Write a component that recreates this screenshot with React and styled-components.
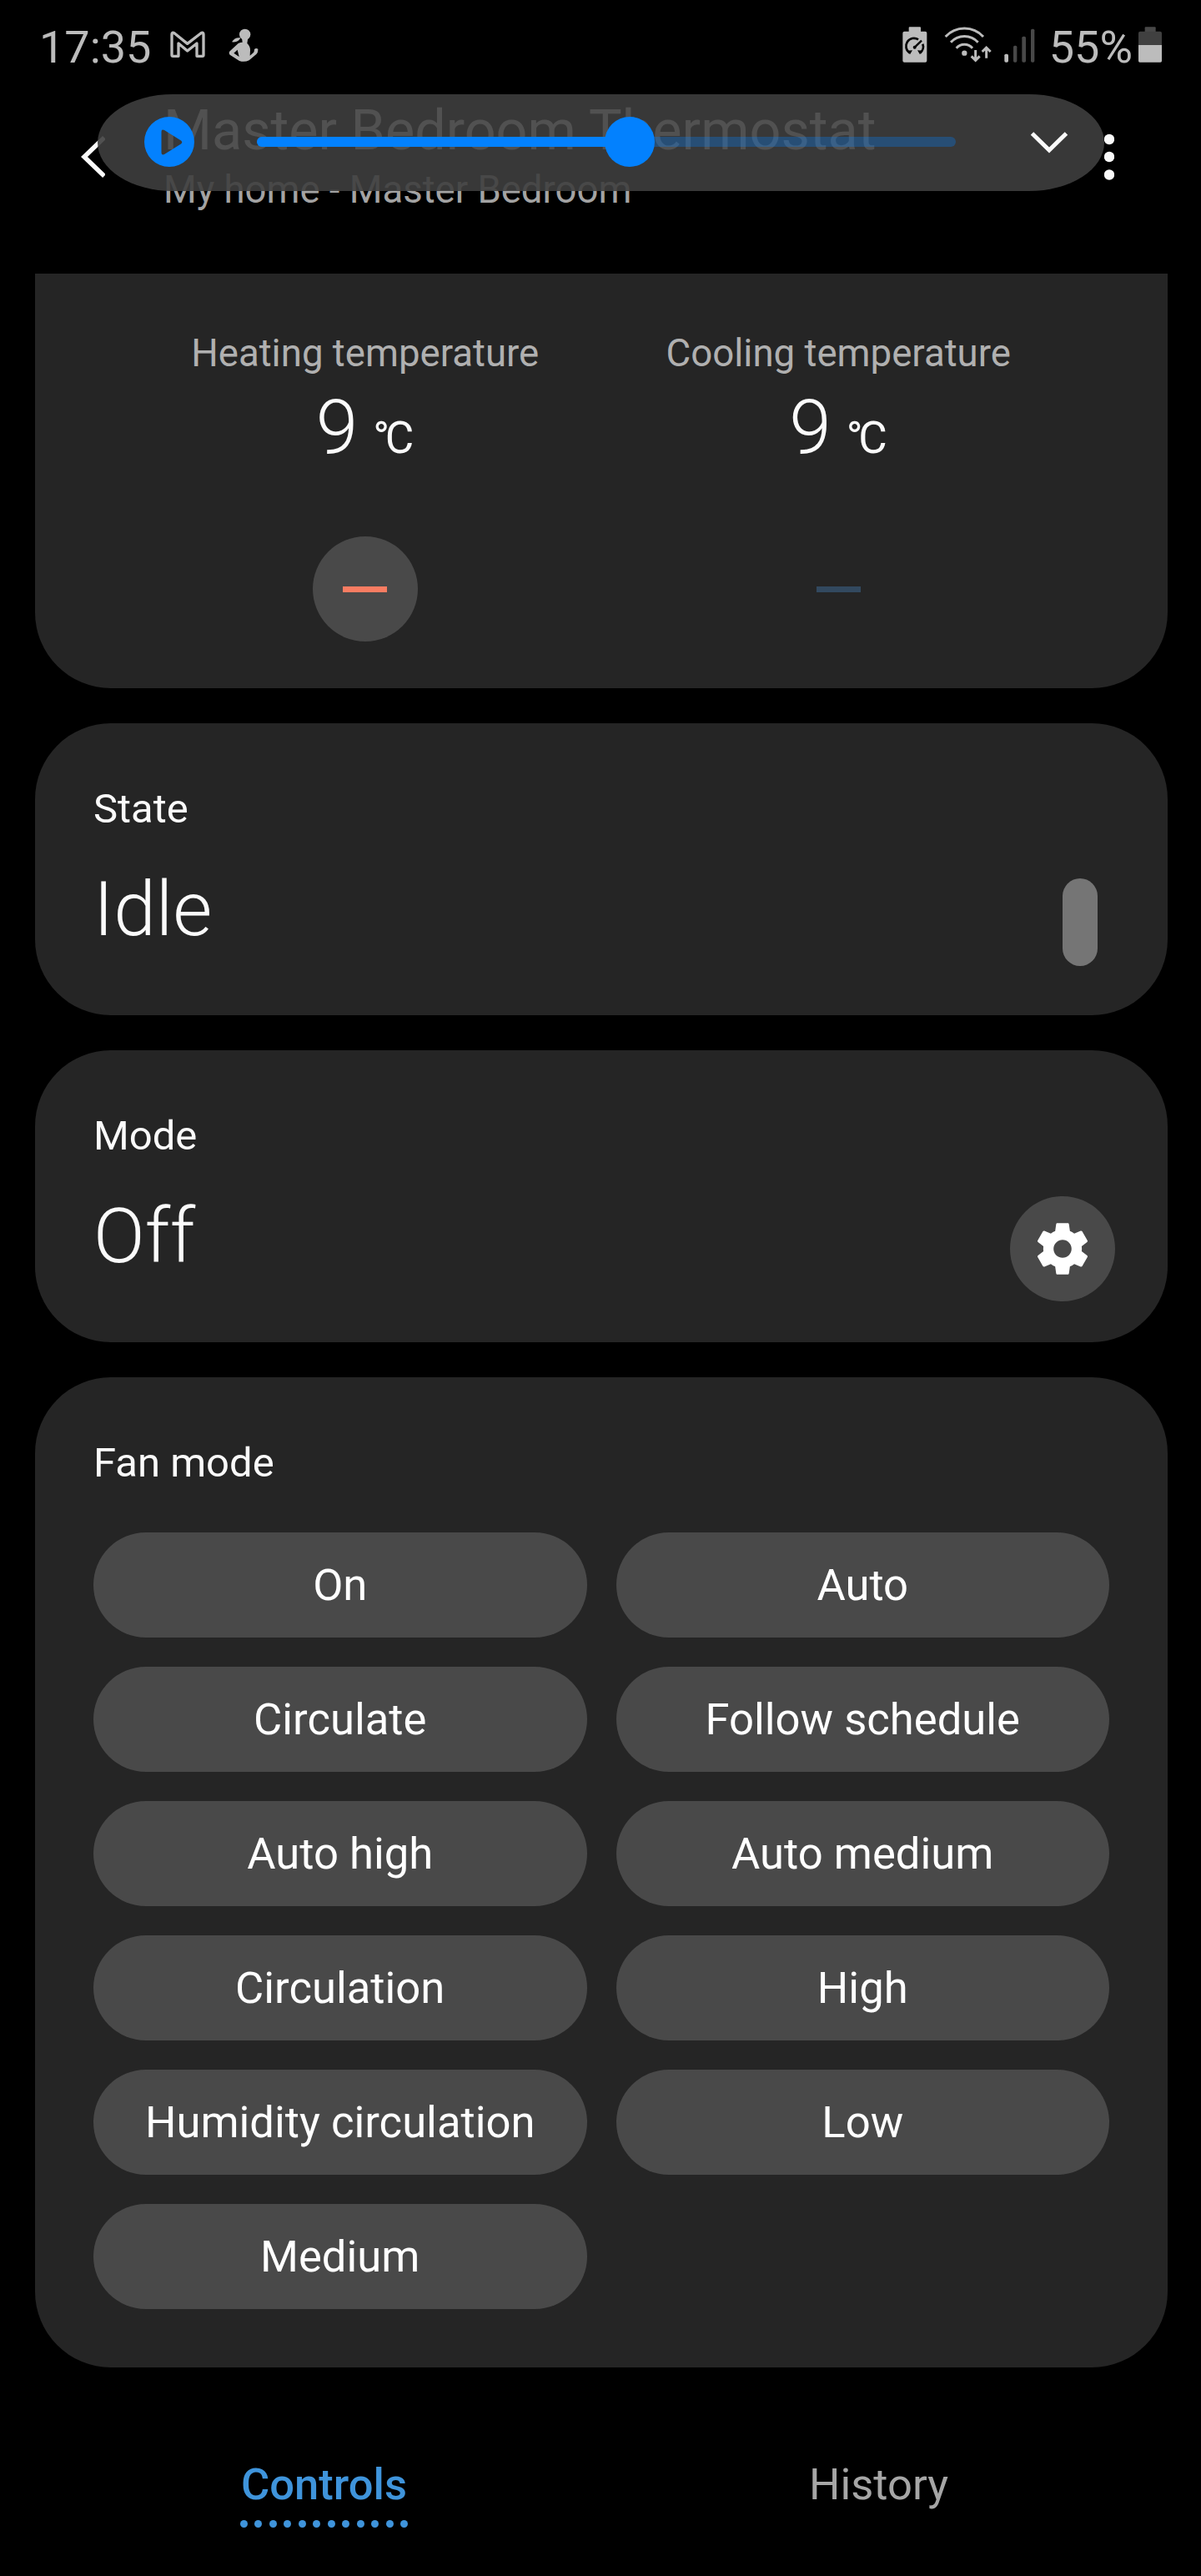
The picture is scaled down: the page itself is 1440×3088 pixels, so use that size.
import React from 'react';
import styled, { createGlobalStyle } from 'styled-components';

const GlobalStyle = createGlobalStyle`
  * {
    box-sizing: border-box;
  }

  body {
    margin: 0;
    background: #000;
    color: #fafafa;
    font-family: Roboto, "Noto Sans", sans-serif;
  }

  button {
    border: 0;
    padding: 0;
    background: none;
    color: inherit;
    font: inherit;
  }

  svg {
    display: block;
    flex: none;
  }
`;

const Screen = styled.div`
  position: relative;
  display: flex;
  flex-direction: column;
  width: 1440px;
  height: 3088px;
  overflow: hidden;
  background: #000;
`;

const StatusBar = styled.div`
  display: flex;
  justify-content: space-between;
  align-items: center;
  height: 108px;
  padding: 0 47px;
  color: #bcbcbc;
`;

const StatusGroup = styled.div`
  display: flex;
  align-items: center;
  gap: ${props => props.$gap}px;
`;

const StatusText = styled.span`
  padding-top: 5px;
  font-size: 54px;
  line-height: 64px;
`;

const Header = styled.header`
  display: flex;
  height: 220px;
  padding: 10px 104px 0 96px;
`;

const HeaderButton = styled.button`
  display: flex;
  align-items: center;
  height: 50px;
  margin-top: 45px;
`;

const Heading = styled.div`
  flex: 1;
  margin-left: 70px;
`;

const Title = styled.h1`
  margin: 0;
  font-size: 66.5px;
  font-weight: 400;
  line-height: 77px;
`;

const Subtitle = styled.div`
  margin-top: 6px;
  color: #a3a3a3;
  font-size: 45.5px;
  line-height: 53px;
`;

// floats above the header, which stays faintly visible through it
const MediaPill = styled.div`
  position: absolute;
  top: 113px;
  left: 117px;
  display: flex;
  align-items: center;
  width: 1207px;
  height: 116px;
  padding: 0 43px 2px 56px;
  border-radius: 90px / 58px;
  background: rgba(62, 62, 62, 0.9);
`;

const Track = styled.div`
  position: relative;
  width: 838px;
  height: 12px;
  margin: 0 89px 0 75px;
  border-radius: 6px;
  background: rgba(3, 129, 254, 0.31);
`;

const TrackFill = styled.div`
  width: ${props => props.$value}%;
  height: 12px;
  border-radius: 6px;
  background: #0381fe;
`;

const Thumb = styled.div`
  position: absolute;
  top: -24px;
  left: ${props => props.$value}%;
  width: 60px;
  height: 60px;
  margin-left: -30px;
  border-radius: 50%;
  background: #0381fe;
`;

const Cards = styled.main`
  display: flex;
  flex-direction: column;
  gap: 42px;
  padding: 0 40px 0 42px;
`;

const Card = styled.section`
  padding: 74px 70px 0 70px;
  border-radius: 91px;
  background: #252525;
`;

const TemperatureCard = styled(Card)`
  display: flex;
  height: 497px;
  padding: 69px 111px 0 112px;
  border-radius: 0 0 91px 91px;
`;

const ValueCard = styled(Card)`
  height: 350px;
  padding-right: 63px;
`;

const FanCard = styled(Card)`
  padding-bottom: 70px;
`;

const Temperature = styled.div`
  flex: 1;
  display: flex;
  flex-direction: column;
  align-items: center;
`;

const TemperatureLabel = styled.div`
  color: #b0b0b0;
  font-size: 45.6px;
  line-height: 53px;
`;

const Reading = styled.div`
  display: flex;
  align-items: flex-end;
  gap: 18px;
  height: 107px;
  margin: 10px 0 76px;
  padding-right: 6px;
`;

const Value = styled.div`
  font-size: 91px;
  font-weight: 300;
  line-height: 107px;
`;

const Unit = styled.div`
  padding-bottom: 11px;
  font-size: 53px;
  letter-spacing: -5.5px;
  line-height: 62px;
`;

const RoundButton = styled.button`
  display: flex;
  align-items: center;
  justify-content: center;
  width: 126px;
  height: 126px;
  border-radius: 50%;
  background: ${props => (props.disabled ? 'transparent' : '#494949')};
`;

const Minus = styled.span`
  width: 53px;
  height: 7px;
  background: ${props => props.$color};
`;

const CardLabel = styled.div`
  font-size: 49px;
  line-height: 58px;
`;

const ValueRow = styled.div`
  display: flex;
  align-items: center;
  justify-content: space-between;
  height: 136px;
  margin-top: 38px;

  ${Value} {
    align-self: flex-start;
  }
`;

const StateBar = styled.div`
  width: 42px;
  height: 105px;
  margin-right: 21px;
  border-radius: 21px;
  background: #757575;
`;

const FanGrid = styled.div`
  display: grid;
  grid-template-columns: 1fr 1fr;
  gap: 35px;
  margin-top: 54px;
`;

const FanButton = styled.button`
  height: 126px;
  border-radius: 63px;
  background: #494949;
  color: #fff;
  font-size: 52.6px;
`;

const Tabs = styled.nav`
  display: flex;
  padding: 109px 54px 0 56px;
`;

const Tab = styled.div`
  flex: 1;
  display: flex;
  flex-direction: column;
  align-items: center;
  color: ${props => (props.$active ? '#3f94db' : '#a6a6a6')};
  font-size: 52.5px;
  font-weight: ${props => (props.$active ? 500 : 400)};
  line-height: 62px;
`;

const Dots = styled.div`
  display: flex;
  justify-content: space-between;
  width: 202px;
  margin-top: 12px;
`;

const Dot = styled.span`
  width: 9px;
  height: 9px;
  border-radius: 50%;
  background: #3f94db;
`;

const GmailIcon = () => (
  <svg width="42" height="44" viewBox="611 96 126 132" fill="none" stroke="#bcbcbc" strokeWidth="10" strokeLinejoin="round">
    <path d="M617 124Q617 114 627 120L673 157L721 120Q731 114 731 124V198Q731 202 727 202H707V156L673 183L641 156V202H621Q617 202 617 198Z" />
  </svg>
);

const PersonIcon = () => (
  <svg width="36" height="44" viewBox="821 96 108 132" fill="#bcbcbc">
    <circle cx="880" cy="124" r="20" />
    <path d="M833 151Q843 133 864 136Q858 154 833 151Z" />
    <path
      fillRule="evenodd"
      d="M869 136H891L888 156Q899 166 899 180L898 200L910 190Q914 186 914 177Q920 171 927 176Q928 188 921 195L895 217Q878 225 860 219L826 197Q820 190 826 184L856 156Q864 152 871 152ZM853 179L840 191L859 204Z"
    />
  </svg>
);

const PowerModeIcon = () => (
  <svg width="30" height="44" viewBox="125 96 90 132">
    <path d="M148 113V100Q148 97 151 97H188Q191 97 191 100V113H207Q213 113 213 119V218Q213 224 207 224H132Q126 224 126 218V119Q126 113 132 113Z" fill="#bcbcbc" />
    <g fill="none" stroke="#000" strokeWidth="8">
      <path d="M151 190A28 28 0 0 1 182 142" />
      <path d="M198 158A28 28 0 0 1 189 190" />
      <path d="M170 169L194 146" strokeWidth="7" />
    </g>
    <circle cx="169" cy="170" r="6" fill="#000" />
    <path d="M143 182L161 181L152 196ZM197 182L179 181L188 196Z" fill="#000" />
  </svg>
);

const WifiIcon = () => (
  <svg width="58" height="44" viewBox="276 96 174 132" fill="none" stroke="#bcbcbc" strokeWidth="9">
    <path d="M281 132A92 92 0 0 1 417 132" />
    <path d="M300 152A66 66 0 0 1 398 152" />
    <path d="M320 173A39 39 0 0 1 378 173" />
    <circle cx="349" cy="191" r="9.5" fill="#bcbcbc" stroke="none" />
    <path d="M389 180V216M374 202L389 217L404 202M428 209V171M413 186L428 171L443 186" />
  </svg>
);

const SignalIcon = () => (
  <svg width="37" height="44" viewBox="491 96 111 132" fill="#484848">
    <rect x="492" y="194" width="14" height="30" rx="5" fill="#bcbcbc" />
    <rect x="524" y="164" width="13" height="60" rx="5" />
    <rect x="555" y="131" width="14" height="93" rx="5" />
    <rect x="587" y="104" width="13" height="120" rx="5" />
  </svg>
);

const BatteryIcon = () => (
  <svg width="28" height="44" viewBox="975 96 84 132">
    <path d="M998 114V100Q998 97 1001 97H1034Q1037 97 1037 100V114Z" fill="#484848" />
    <path d="M975 162V119Q975 113 981 113H1053Q1059 113 1059 119V162Z" fill="#404040" />
    <path d="M975 162H1059V219Q1059 224 1054 224H980Q975 224 975 219Z" fill="#bcbcbc" />
  </svg>
);

const BackIcon = () => (
  <svg width="30" height="50" viewBox="0 0 30 50" fill="none" stroke="#fafafa" strokeWidth="5.5">
    <path d="M29 2L5 25L29 48" />
  </svg>
);

const MoreIcon = () => (
  <svg width="12" height="56" viewBox="0 0 12 56" fill="#fafafa">
    <circle cx="6" cy="7" r="6.2" />
    <circle cx="6" cy="28" r="6.2" />
    <circle cx="6" cy="49.5" r="6.2" />
  </svg>
);

const PlayIcon = () => (
  <svg width="60" height="60" viewBox="0 0 60 60" fill="#0381fe">
    <path
      fillRule="evenodd"
      d="M30 0A30 30 0 1 1 30 60A30 30 0 1 1 30 0ZM20.5 18V43Q20.5 46.5 24 45L44 32.5Q46.5 30.5 44 28.5L24 16Q20.5 14.5 20.5 18Z"
    />
  </svg>
);

const ExpandIcon = () => (
  <svg width="46" height="28" viewBox="0 0 46 28" fill="none" stroke="#fafafa" strokeWidth="5">
    <path d="M2.5 4L23 24L43.5 4" />
  </svg>
);

const GearIcon = () => (
  <svg width="74" height="74" viewBox="0 0 24 24" fill="#fff">
    <path d="M19.43 12.98c.04-.32.07-.64.07-.98s-.03-.66-.07-.98l2.11-1.65c.19-.15.24-.42.12-.64l-2-3.46c-.12-.22-.39-.3-.61-.22l-2.49 1c-.52-.4-1.08-.73-1.69-.98l-.38-2.65C14.46 2.18 14.25 2 14 2h-4c-.25 0-.46.18-.49.42l-.38 2.65c-.61.25-1.17.59-1.69.98l-2.49-1c-.23-.09-.49 0-.61.22l-2 3.46c-.13.22-.07.49.12.64l2.11 1.65c-.04.32-.07.65-.07.98s.03.66.07.98l-2.11 1.65c-.19.15-.24.42-.12.64l2 3.46c.12.22.39.3.61.22l2.49-1c.52.4 1.08.73 1.69.98l.38 2.65c.03.24.24.42.49.42h4c.25 0 .46-.18.49-.42l.38-2.65c.61-.25 1.17-.59 1.69-.98l2.49 1c.23.09.49 0 .61-.22l2-3.46c.12-.22.07-.49-.12-.64l-2.11-1.65zM12 15.5c-1.93 0-3.5-1.57-3.5-3.5s1.57-3.5 3.5-3.5 3.5 1.57 3.5 3.5-1.57 3.5-3.5 3.5z" />
  </svg>
);

const temperatures = [
  { label: 'Heating temperature', value: 9, color: '#f97c62', disabled: false },
  { label: 'Cooling temperature', value: 9, color: '#32495f', disabled: true },
];

const fanModes = [
  'On',
  'Auto',
  'Circulate',
  'Follow schedule',
  'Auto high',
  'Auto medium',
  'Circulation',
  'High',
  'Humidity circulation',
  'Low',
  'Medium',
];

const mediaVolume = 53.4;

export default function App() {
  return (
    <Screen>
      <GlobalStyle />

      <StatusBar>
        <StatusGroup $gap={28}>
          <StatusGroup $gap={23}>
            <StatusText>17:35</StatusText>
            <GmailIcon />
          </StatusGroup>
          <PersonIcon />
        </StatusGroup>
        <StatusGroup $gap={17}>
          <StatusGroup $gap={20}>
            <PowerModeIcon />
            <StatusGroup $gap={14}>
              <WifiIcon />
              <SignalIcon />
            </StatusGroup>
          </StatusGroup>
          <StatusGroup $gap={7}>
            <StatusText>55%</StatusText>
            <BatteryIcon />
          </StatusGroup>
        </StatusGroup>
      </StatusBar>

      <Header>
        <HeaderButton aria-label="Back"><BackIcon /></HeaderButton>
        <Heading>
          <Title>Master Bedroom Thermostat</Title>
          <Subtitle>My home - Master Bedroom</Subtitle>
        </Heading>
        <HeaderButton aria-label="More options"><MoreIcon /></HeaderButton>
      </Header>

      <Cards>
        <TemperatureCard>
          {temperatures.map(({ label, value, color, disabled }) => (
            <Temperature key={label}>
              <TemperatureLabel>{label}</TemperatureLabel>
              <Reading>
                <Value>{value}</Value>
                <Unit>°C</Unit>
              </Reading>
              <RoundButton disabled={disabled} aria-label="Decrease">
                <Minus $color={color} />
              </RoundButton>
            </Temperature>
          ))}
        </TemperatureCard>

        <ValueCard>
          <CardLabel>State</CardLabel>
          <ValueRow>
            <Value>Idle</Value>
            <StateBar />
          </ValueRow>
        </ValueCard>

        <ValueCard>
          <CardLabel>Mode</CardLabel>
          <ValueRow>
            <Value>Off</Value>
            <RoundButton aria-label="Change mode"><GearIcon /></RoundButton>
          </ValueRow>
        </ValueCard>

        <FanCard>
          <CardLabel>Fan mode</CardLabel>
          <FanGrid>
            {fanModes.map(mode => <FanButton key={mode}>{mode}</FanButton>)}
          </FanGrid>
        </FanCard>
      </Cards>

      <Tabs>
        <Tab $active>
          Controls
          <Dots>
            {Array.from({ length: 12 }, (_, i) => <Dot key={i} />)}
          </Dots>
        </Tab>
        <Tab>History</Tab>
      </Tabs>

      <MediaPill>
        <PlayIcon />
        <Track>
          <TrackFill $value={mediaVolume} />
          <Thumb $value={mediaVolume} />
        </Track>
        <ExpandIcon />
      </MediaPill>
    </Screen>
  );
}
